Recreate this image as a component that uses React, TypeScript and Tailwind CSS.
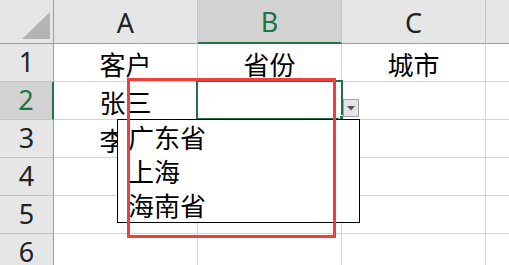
import { ReactNode } from 'react';

const GREEN = 'border-[#217346]';
const latin = { fontFamily: '"Noto Sans", "Liberation Sans", sans-serif' };
const cjk = { fontFamily: '"Noto Sans CJK SC", "Noto Sans", sans-serif' };

const data: string[][] = [
  ['客户', '省份', '城市'],
  ['张三', '', ''],
  ['李四', '', ''],
  ['', '', ''],
  ['', '', ''],
  ['', '', ''],
];

function ColHeader({ label, active, last }: { label: string; active?: boolean; last?: boolean }) {
  return (
    <div
      className={`flex items-end justify-center pb-[3px] text-[27px] leading-none ${
        last ? 'flex-1' : 'w-[144px] border-r border-r-[#c6c6c6]'
      } ${active ? 'bg-[#d2d2d2] text-[#217346] border-b-2 ' + GREEN : 'border-b border-b-[#9e9e9e]'}`}
      style={latin}
    >
      <span className="pb-[4px]">{label}</span>
    </div>
  );
}

function Cell({ children, last }: { children?: ReactNode; last?: boolean }) {
  return (
    <div
      className={`flex items-end justify-center border-b border-[#d4d4d4] pb-[2px] text-[26px] leading-[30px] text-black ${
        last ? 'flex-1' : 'w-[144px] border-r'
      }`}
      style={cjk}
    >
      {children}
    </div>
  );
}

export default function App() {
  return (
    <div className="relative w-[509px] h-[265px] overflow-hidden bg-white select-none">
      {/* column headers */}
      <div className="flex h-[44px] bg-[#e6e6e6] text-[#222]">
        <div className="relative w-[54px] border-r border-b border-[#9e9e9e]">
          <svg width="54" height="44" className="absolute left-0 top-0">
            <polygon points="22,39 50,39 50,12" fill="#b4b4b4" />
          </svg>
        </div>
        <ColHeader label="A" />
        <ColHeader label="B" active />
        <ColHeader label="C" />
        <ColHeader label="" last />
      </div>

      {/* rows */}
      {data.map((row, i) => {
        const active = i === 1;
        return (
          <div key={i} className="flex h-[38px]">
            <div
              className={`flex w-[54px] items-end justify-center border-b border-b-[#c4c4c4] pb-[3px] text-[27px] leading-none ${
                active
                  ? 'bg-[#d2d2d2] text-[#217346] border-r-2 ' + GREEN
                  : 'bg-[#e6e6e6] text-[#222] border-r border-r-[#9e9e9e]'
              }`}
              style={latin}
            >
              <span className="pb-[3px]">{i + 1}</span>
            </div>
            <Cell>{row[0]}</Cell>
            <Cell>{row[1]}</Cell>
            <Cell>{row[2]}</Cell>
            <Cell last />
          </div>
        );
      })}

      {/* active cell B2 */}
      <div className={`absolute left-[196px] top-[80px] w-[147px] h-[40px] border-2 ${GREEN}`} />
      <div className="absolute left-[339px] top-[115px] w-[5px] h-[5px] bg-[#217346] border border-white" />

      {/* dropdown arrow button */}
      <div className="absolute left-[343px] top-[99px] flex h-[18px] w-[16px] items-center justify-center border border-[#a0a0a0] bg-[#e4e4ea]">
        <svg width="8" height="5" viewBox="0 0 8 5">
          <polygon points="0,0 8,0 4,4.5" fill="#555" />
        </svg>
      </div>

      {/* validation list */}
      <div
        className="absolute left-[117px] top-[119px] w-[243px] h-[104px] border border-black bg-white pl-[10px] text-[26px] leading-[34px] text-black"
        style={cjk}
      >
        <div>广东省</div>
        <div>上海</div>
        <div>海南省</div>
      </div>

      {/* annotation */}
      <div className="absolute left-[127px] top-[78px] w-[209px] h-[160px] border-[3px] border-[#ef3e3e]" />
    </div>
  );
}
